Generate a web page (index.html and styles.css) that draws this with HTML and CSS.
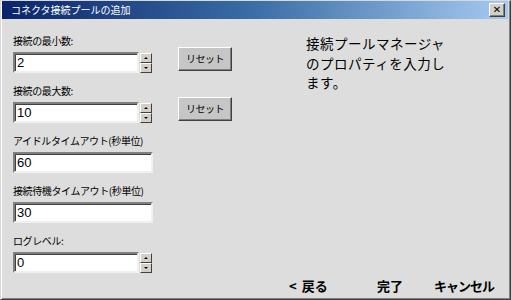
FILE: index.html
```html
<!DOCTYPE html>
<html lang="ja">
<head>
<meta charset="utf-8">
<link rel="stylesheet" href="styles.css">
</head>
<body>
<div class="window">
  <div class="titlebar">
    <span class="title">コネクタ接続プールの追加</span>
    <span class="close">✕</span>
  </div>
  <div class="body">
    <div class="form">
      <div class="row">
        <div class="field">
          <div class="label">接続の最小数:</div>
          <div class="spin-input">
            <div class="textbox short">2</div>
            <div class="spinner"><span class="sbtn up"></span><span class="sbtn down"></span></div>
          </div>
        </div>
        <div class="reset">リセット</div>
      </div>
      <div class="row">
        <div class="field">
          <div class="label">接続の最大数:</div>
          <div class="spin-input">
            <div class="textbox short">10</div>
            <div class="spinner"><span class="sbtn up"></span><span class="sbtn down"></span></div>
          </div>
        </div>
        <div class="reset">リセット</div>
      </div>
      <div class="row">
        <div class="field">
          <div class="label">アイドルタイムアウト(秒単位)</div>
          <div class="textbox long">60</div>
        </div>
      </div>
      <div class="row">
        <div class="field">
          <div class="label">接続待機タイムアウト(秒単位)</div>
          <div class="textbox long">30</div>
        </div>
      </div>
      <div class="row">
        <div class="field">
          <div class="label">ログレベル:</div>
          <div class="spin-input">
            <div class="textbox short">0</div>
            <div class="spinner"><span class="sbtn up"></span><span class="sbtn down"></span></div>
          </div>
        </div>
      </div>
    </div>
    <div class="desc">
      <div class="dline">接続プールマネージャ</div>
      <div class="dline">のプロパティを入力し</div>
      <div class="dline">ます。</div>
    </div>
  </div>
  <div class="footer">
    <span class="fbtn back"><span class="lt">&lt;</span>戻る</span>
    <span class="fbtn done">完了</span>
    <span class="fbtn cancel">キャンセル</span>
  </div>
</div>
</body>
</html>
```
FILE: styles.css
```css
* { box-sizing: border-box; }
html, body { margin: 0; padding: 0; background: #dddddd; }
body { font-family: "Noto Sans CJK JP", "DejaVu Sans", sans-serif; }

.window {
  width: 511px;
  height: 300px;
  background: #dddddd;
  border: 1px solid;
  border-color: #d8d8d8 #404040 #404040 #d8d8d8;
  box-shadow: inset 1px 0 #ffffff, inset -1px -1px #808080;
  padding: 0 2px 0 1px;
  overflow: hidden;
}

.titlebar {
  height: 18px;
  background: linear-gradient(to right, #0a246a 0%, #3a6ea5 50%, #a6caf0 100%);
  display: flex;
  align-items: center;
  justify-content: space-between;
  padding: 0 3px 0 9px;
}
.title {
  color: #ffffff;
  font-size: 10px;
  line-height: 18px;
}
.close {
  width: 16px;
  height: 14px;
  background: #d4d0c8;
  border: 1px solid;
  border-color: #ffffff #404040 #404040 #ffffff;
  box-shadow: inset -1px -1px #808080;
  font-family: "DejaVu Sans", sans-serif;
  font-size: 10px;
  font-weight: bold;
  line-height: 12px;
  text-align: center;
  color: #000;
}

.body {
  display: flex;
}
.form {
  width: 234px;
  padding: 14px 0 0 11px;
  flex: 0 0 auto;
}
.row {
  display: flex;
  height: 40px;
  margin-bottom: 10px;
}
.row:last-child { margin-bottom: 0; }
.field { display: flex; flex-direction: column; }
.label {
  font-size: 10px;
  line-height: 16px;
  height: 16px;
  margin-bottom: 3px;
  letter-spacing: -0.4px;
  color: #000;
  white-space: nowrap;
}
.spin-input { display: flex; }
.textbox {
  height: 21px;
  background: #ffffff;
  border: 2px solid;
  border-color: #808080 #f0f0f0 #f0f0f0 #808080;
  box-shadow: inset 1px 1px #404040;
  font-family: "Liberation Sans", Arial, sans-serif;
  font-size: 13px;
  line-height: 17px;
  padding-left: 2px;
  color: #000;
}
.textbox.short { width: 126px; }
.textbox.long { width: 140px; }

.spinner {
  margin-left: 1px;
  padding-top: 1px;
  display: flex;
  flex-direction: column;
}
.sbtn {
  display: block;
  width: 12px;
  height: 10px;
  background: #d4d0c8;
  border: 1px solid;
  border-color: #ffffff #404040 #404040 #ffffff;
  position: relative;
}
.sbtn::after {
  content: "";
  position: absolute;
  left: 3px;
  width: 0;
  height: 0;
  border-left: 2px solid transparent;
  border-right: 2px solid transparent;
}
.sbtn.up::after { top: 3px; border-bottom: 2px solid #000; }
.sbtn.down::after { top: 3px; border-top: 2px solid #000; }

.reset {
  margin: 14px 0 0 26px;
  width: 54px;
  height: 24px;
  background: #c6c6c6;
  border: 1px solid;
  border-color: #ffffff #404040 #404040 #ffffff;
  box-shadow: inset -1px -1px #808080;
  font-size: 10px;
  letter-spacing: -0.5px;
  line-height: 21px;
  text-align: center;
  color: #000;
}

.desc {
  padding: 15px 0 0 70px;
  color: #000;
  white-space: nowrap;
}
.dline {
  font-size: 13.5px;
  letter-spacing: 0.5px;
  line-height: 19.5px;
  height: 19.5px;
}

.footer {
  display: flex;
  margin-top: 4px;
  padding-left: 287px;
  font-size: 13px;
  font-weight: bold;
  line-height: 18px;
  color: #000;
}
.fbtn { white-space: nowrap; }
.lt { margin-right: 5px; }
.back { width: 88px; }
.done { width: 57px; }
.cancel { letter-spacing: -1px; }
```
